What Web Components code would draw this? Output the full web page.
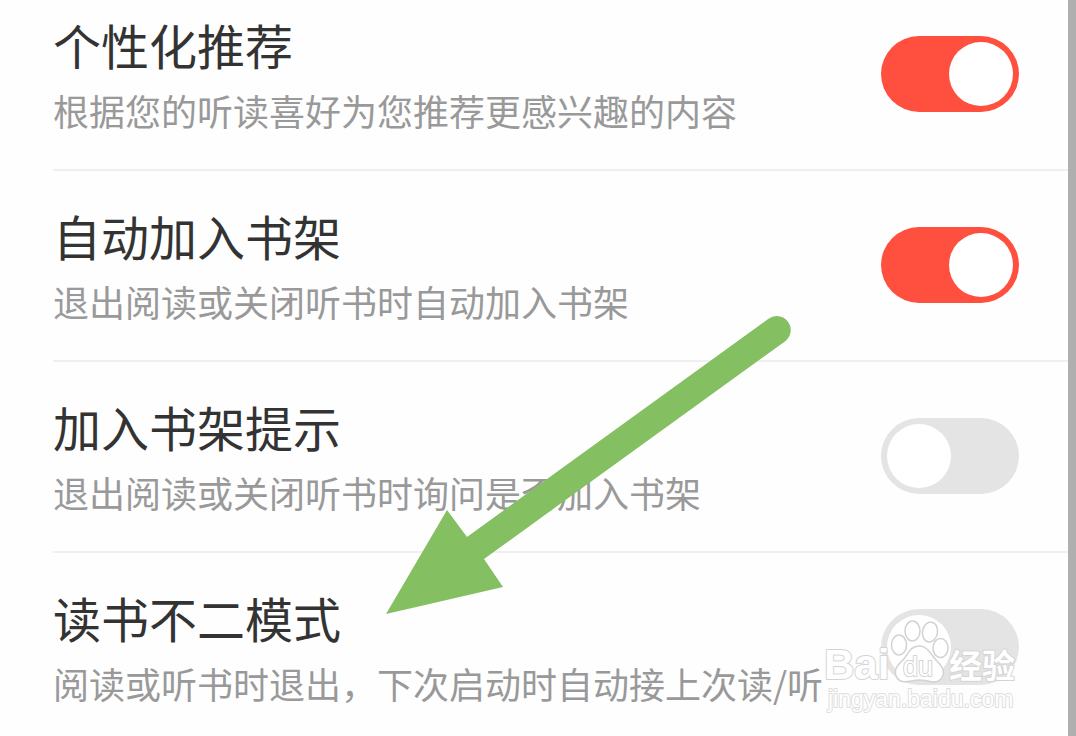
<!DOCTYPE html>
<html lang="zh-CN">
<head>
<meta charset="utf-8">
<meta name="viewport" content="width=device-width, initial-scale=1">
<title>阅读设置</title>
<style>
  body { margin: 0; background: #fefefe; color: #333; font-family: "Noto Sans CJK SC", sans-serif; overflow: hidden; }
</style>
</head>
<body>
<settings-page>
  <setting-row checked>
    <span slot="title">个性化推荐</span>
    <span slot="note">根据您的听读喜好为您推荐更感兴趣的内容</span>
  </setting-row>
  <setting-row checked>
    <span slot="title">自动加入书架</span>
    <span slot="note">退出阅读或关闭听书时自动加入书架</span>
  </setting-row>
  <setting-row>
    <span slot="title">加入书架提示</span>
    <span slot="note">退出阅读或关闭听书时询问是否加入书架</span>
  </setting-row>
  <setting-row>
    <span slot="title">读书不二模式</span>
    <span slot="note">阅读或听书时退出，下次启动时自动接上次读/听</span>
  </setting-row>
  <pointer-arrow slot="overlay"></pointer-arrow>
  <site-watermark slot="overlay"></site-watermark>
</settings-page>

<template id="page-template">
  <style>
    :host { display: grid; grid-template-columns: 1fr 8px; min-height: 100vh; position: relative; }
    main { padding-left: 53px; min-width: 0; }
    .edge { background: #afafaf; }
  </style>
  <main><slot></slot></main>
  <div class="edge"></div>
  <slot name="overlay"></slot>
</template>

<template id="row-template">
  <style>
    :host { display: block; padding: 32px 49px 35px 0; border-bottom: 2px solid #efefef; }
    :host(:first-of-type) { padding-top: 12px; }
    :host(:last-of-type) { border-bottom: 0; padding-bottom: 0; }
    label { display: flex; justify-content: space-between; align-items: flex-start; }
    .text { display: flex; flex-direction: column; gap: 10px; white-space: nowrap; width: 0; flex: 1; }
    .title { font-size: 48px; line-height: 64px; }
    .note { font-size: 36px; line-height: 48px; color: #999; }
    input {
      appearance: none; box-sizing: border-box; flex: none;
      width: 138px; height: 76px; margin: 24px 0 0; padding: 6px;
      border-radius: 38px; background: #e4e4e4; display: flex;
    }
    input::before { content: ""; width: 64px; height: 64px; border-radius: 50%; background: #fff; }
    input:checked { background: #ff4f3f; justify-content: flex-end; }
  </style>
  <label>
    <span class="text">
      <span class="title"><slot name="title"></slot></span>
      <span class="note"><slot name="note"></slot></span>
    </span>
    <input type="checkbox" role="switch">
  </label>
</template>

<template id="arrow-template">
  <style>
    :host { display: block; position: absolute; left: 386px; top: 315px; pointer-events: none; }
    svg { display: block; }
  </style>
  <svg width="406" height="300" viewBox="386 315 406 300" aria-hidden="true">
    <path d="M386 614 447 510 467 537 768.5 318.7A14 14 0 0 1 784.9 341.4L484 559 503 587Z" fill="#84bf62"/>
  </svg>
</template>

<template id="watermark-template">
  <style>
    :host { display: block; position: absolute; right: 48px; top: 610px; pointer-events: none; }
    svg { display: block; }
    text { fill: #fff; stroke: #d4d4d4; stroke-width: 2px; paint-order: stroke; stroke-linejoin: round; }
    .latin { font-family: "Liberation Sans", sans-serif; }
    .cjk { font-family: "Noto Sans CJK SC", sans-serif; }
    .url { stroke: #dedede; }
  </style>
  <svg width="206" height="106" viewBox="822 610 206 106">
    <g fill="#fff" stroke="#d2d2d2" stroke-width="1.5">
      <ellipse cx="899" cy="645" rx="7.5" ry="10"/>
      <ellipse cx="912.5" cy="631" rx="7.5" ry="10"/>
      <ellipse cx="930" cy="632" rx="7.5" ry="10" transform="rotate(10 930 632)"/>
      <ellipse cx="940.5" cy="648" rx="7.5" ry="9.5"/>
      <path d="M919 646C910 646 908 655 902 661C895 667 894 673 897 678C902 685 911 680 919 680C928 680 935 685 941 679C946 673 943 667 937 661C930 654 928 646 919 646Z"/>
    </g>
    <text class="latin" x="824" y="679" font-size="42" font-weight="700">Bai</text>
    <text class="latin" x="903" y="676" font-size="27">du</text>
    <text class="cjk" x="949" y="678" font-size="33" font-weight="700">经验</text>
    <text class="latin url" x="828" y="707" font-size="23">jingyan.baidu.com</text>
  </svg>
</template>

<script>
  function stamp(host, id) {
    const root = host.attachShadow({ mode: "open" });
    root.append(document.getElementById(id).content.cloneNode(true));
    return root;
  }
  customElements.define("settings-page", class extends HTMLElement {
    constructor() { super(); stamp(this, "page-template"); }
  });
  customElements.define("setting-row", class extends HTMLElement {
    constructor() {
      super();
      stamp(this, "row-template").querySelector("input").checked = this.hasAttribute("checked");
    }
  });
  customElements.define("pointer-arrow", class extends HTMLElement {
    constructor() { super(); stamp(this, "arrow-template"); }
  });
  customElements.define("site-watermark", class extends HTMLElement {
    constructor() { super(); stamp(this, "watermark-template"); }
  });
</script>
</body>
</html>
